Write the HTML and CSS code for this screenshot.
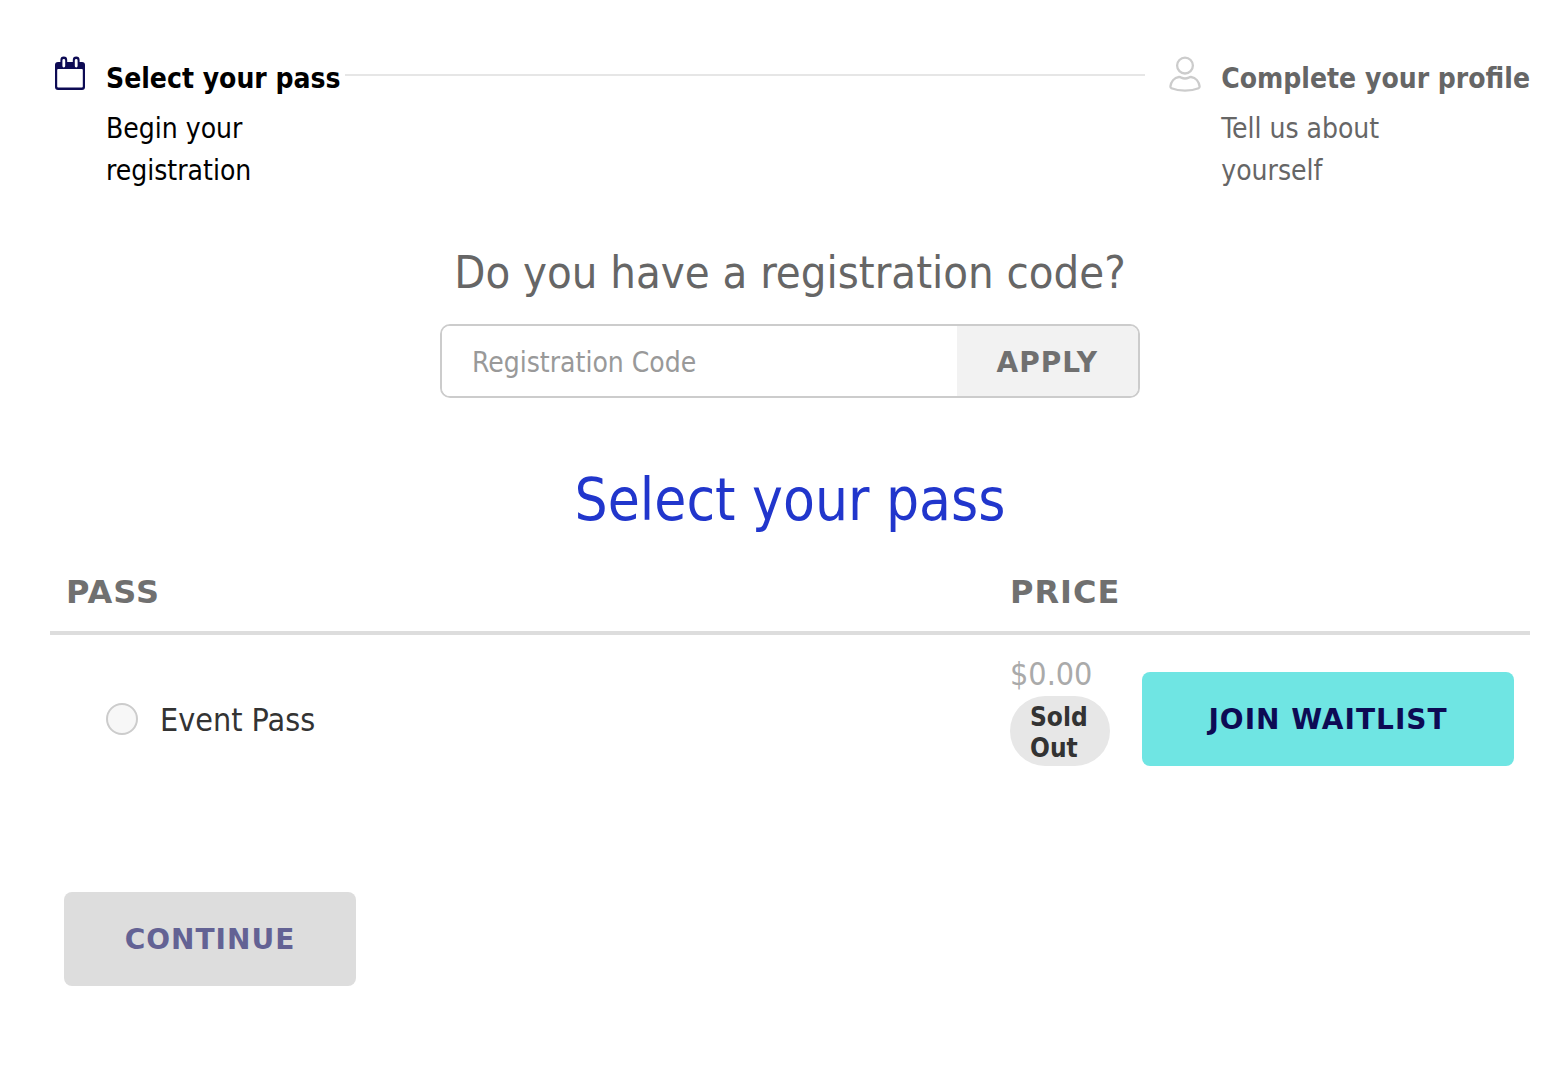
FILE: index.html
```html
<!DOCTYPE html>
<html lang="en">
<head>
<meta charset="utf-8">
<meta name="viewport" content="width=device-width, initial-scale=1">
<title>Select your pass</title>
<link rel="stylesheet" href="styles.css">
</head>
<body>
<main class="page">
  <ol class="steps">
    <li class="step step-current" aria-current="step">
      <svg class="step-icon" viewBox="0 0 32 36" aria-hidden="true">
        <path d="M4 6H28Q31 6 31 9V31Q31 34 28 34H4Q1 34 1 31V9Q1 6 4 6Z" fill="currentColor"/>
        <rect x="3.2" y="13" width="25.6" height="18.6" rx="1" fill="#fff"/>
        <path d="M6.4 11V4a3.4 3.4 0 0 1 6.8 0V11ZM18.8 11V4a3.4 3.4 0 0 1 6.8 0V11Z" fill="currentColor"/>
        <path d="M9.8 4.4V10M22.2 4.4V10" stroke="#fff" stroke-width="2.8" stroke-linecap="round"/>
      </svg>
      <div class="step-text">
        <h2 class="step-title">Select your pass</h2>
        <p class="step-note">Begin your registration</p>
      </div>
    </li>
    <li class="step-line" role="presentation"></li>
    <li class="step step-next">
      <svg class="step-icon" viewBox="0 0 32 36" fill="none" stroke="currentColor" stroke-width="2.3" stroke-linejoin="round" aria-hidden="true">
        <circle cx="16" cy="9.6" r="7.9"/>
        <path d="M10 21C5 21.6 2 26 1.4 30.4Q1.3 31.8 2.4 32.2Q8 34.6 16 34.6Q24 34.6 29.6 32.2Q30.7 31.8 30.6 30.4C30 26 27 21.6 22 21Q20.800 20.900 19.800 21.600Q16 23.400 12.200 21.600Q11.200 20.900 10 21Z"/>
      </svg>
      <div class="step-text">
        <h2 class="step-title">Complete your profile</h2>
        <p class="step-note">Tell us about yourself</p>
      </div>
    </li>
  </ol>

  <form class="code">
    <label class="code-label" for="code">Do you have a registration code?</label>
    <div class="code-box">
      <input class="code-input" id="code" type="text" placeholder="Registration Code">
      <button class="code-apply" type="button">APPLY</button>
    </div>
  </form>

  <form class="passes">
    <h1 class="title">Select your pass</h1>
    <table class="pass-table">
      <thead>
        <tr><th class="col-pass" scope="col">PASS</th><th class="col-price" scope="col">PRICE</th><td class="col-action"></td></tr>
      </thead>
      <tbody>
        <tr>
          <td>
            <div class="choice">
              <input class="radio" id="event-pass" type="radio" name="pass" disabled>
              <label for="event-pass">Event Pass</label>
            </div>
          </td>
          <td class="cell-price"><span class="price">$0.00</span><span class="badge">Sold Out</span></td>
          <td><button class="button button-join" type="button">JOIN WAITLIST</button></td>
        </tr>
      </tbody>
    </table>
    <button class="button button-continue" type="button" disabled>CONTINUE</button>
  </form>
</main>
</body>
</html>
```
FILE: styles.css
```css
* { box-sizing: border-box; }

body {
  margin: 0;
  background: #fff;
  color: #333;
  font-family: Tahoma, "DejaVu Sans Condensed", "DejaVu Sans", sans-serif;
  font-size: 28px;
}

input, button { font: inherit; }

.page { padding: 56px 34px 80px 50px; }

.steps {
  display: flex;
  align-items: flex-start;
  margin: 0;
  padding: 0 0 0 4px;
  list-style: none;
}

.step { display: flex; gap: 20px; }

.step-icon { flex: none; width: 32px; height: 36px; }

.step-text { width: min-content; padding-top: 2px; }

.step-title {
  margin: 0;
  font-size: 28px;
  line-height: 42px;
  white-space: nowrap;
}

.step-note {
  max-width: 200px;
  margin: 8px 0 0;
  line-height: 42px;
}

.step-current { color: #000; }
.step-current .step-icon { color: #0d0b54; }
.step-next { color: #666; }
.step-next .step-icon { color: #ccc; }

.step-line {
  flex: 1;
  height: 2px;
  margin: 18px 24px 0 4px;
  background: #e6e6e6;
}

.code {
  max-width: 700px;
  margin: 48px auto 0;
}

.code-label {
  display: block;
  color: #666;
  font-size: 45px;
  line-height: 66px;
  text-align: center;
}

.code-box {
  display: flex;
  height: 74px;
  margin-top: 18px;
  border: 2px solid #ccc;
  border-radius: 10px;
  overflow: hidden;
}

.code-input {
  flex: 1;
  min-width: 0;
  padding: 2px 30px 0;
  border: 0;
  background: #fff;
}

.code-input::placeholder { color: #999; opacity: 1; }

.code-apply, .pass-table th, .button {
  font-family: "DejaVu Sans", sans-serif;
  font-weight: bold;
  letter-spacing: 1px;
}

.code-apply {
  padding: 2px 40px 0;
  border: 0;
  background: #f2f2f2;
  color: #707070;
}

.title {
  margin: 60px 0 0;
  color: #2136cc;
  font-size: 58px;
  font-weight: normal;
  line-height: 84px;
  text-align: center;
}

.pass-table {
  width: 100%;
  margin-top: 8px;
  border-collapse: collapse;
  table-layout: fixed;
  font-size: 32px;
}

.pass-table th, .pass-table td { padding: 0 16px; text-align: left; }

.pass-table thead { border-bottom: 4px solid #ddd; }

.pass-table th {
  height: 83px;
  padding-top: 2px;
  color: #707070;
}

.pass-table tbody td { height: 170px; }

.pass-table .cell-price { padding-bottom: 20px; }

.col-price { width: 132px; }
.col-action { width: 404px; }

.choice { display: flex; align-items: center; gap: 22px; padding-left: 40px; }

.choice label { padding-top: 2px; }

.radio {
  appearance: none;
  width: 32px;
  height: 32px;
  margin: 0;
  border: 2px solid #ccc;
  border-radius: 50%;
  background: #f7f7f7;
}

.price { display: block; color: #aaa; line-height: 44px; }

.badge {
  display: block;
  padding: 6px 20px 2px;
  border-radius: 36px;
  background: #e7e7e7;
  font-size: 26px;
  font-weight: bold;
  line-height: 31px;
}

.button {
  height: 94px;
  border: 0;
  border-radius: 8px;
  font-size: 28px;
}

.button-join {
  width: 100%;
  background: #6fe5e3;
  color: #0d0b54;
}

.button-continue {
  display: block;
  min-width: 292px;
  margin: 89px 0 0 14px;
  background: #ddd;
  color: #636294;
}
```
